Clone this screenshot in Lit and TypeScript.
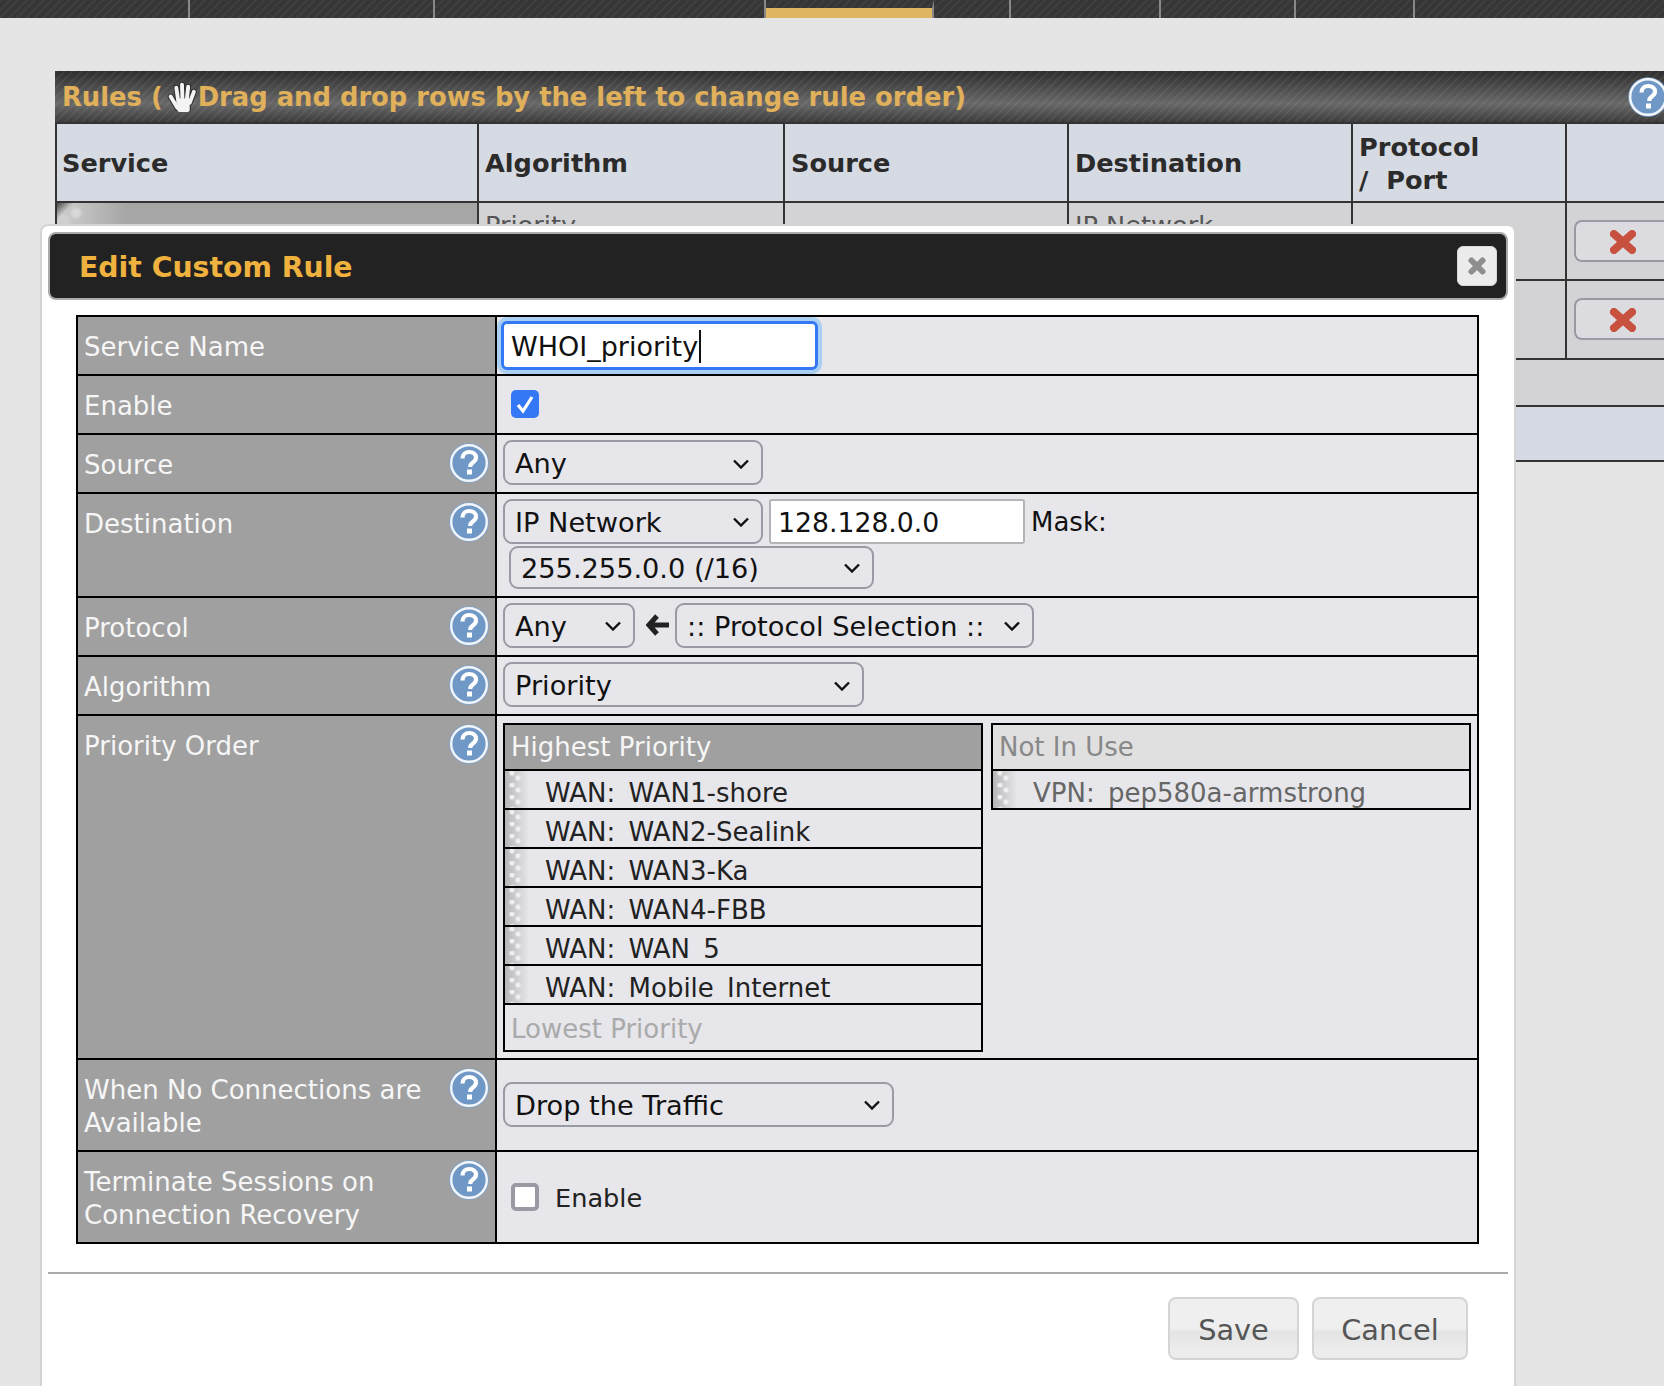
import { LitElement, html, css } from "lit";
import { customElement } from "lit/decorators.js";

const helpIcon = (cls = "help") => html`<svg class=${cls} viewBox="0 0 40 40">
  <circle cx="20" cy="20" r="19.8" fill="#7ba3d0"></circle>
  <circle cx="20" cy="20" r="17.8" fill="#6f98c6" stroke="#f2f5f9" stroke-width="2.4"></circle>
  <path d="M13.500 15.500c0-4 3-6.500 6.800-6.500 4 0 6.700 2.300 6.700 5.600 0 2.600-1.600 3.900-3.400 5.100-1.500 1-2.300 1.800-2.300 3.600v.7" fill="none" stroke="#fff" stroke-width="4.200"></path>
  <rect x="18" y="26.500" width="5" height="5" fill="#fff"></rect>
</svg>`;

const chevron = html`<svg class="chev" viewBox="0 0 16 10"><path d="M1 1.500l7 7 7-7" fill="none" stroke="#111" stroke-width="2.400"></path></svg>`;

const redX = html`<svg class="redx" viewBox="0 0 26 24"><path d="M4 4l18 16M22 4L4 20" stroke="#c8503f" stroke-width="8" stroke-linecap="round"></path></svg>`;

const handStrokes = "M10 26L3.500 15M11 20L9 6.500M15 20L14.500 3.500M19 20L20.500 5.500M22 21L26 10.500";

@customElement("app-root")
export class AppRoot extends LitElement {
  static styles = css`
    :host {
      display: block;
      position: relative;
      width: 1664px;
      height: 1386px;
      overflow: hidden;
      background: #e5e5e5;
      font-family: "DejaVu Sans", sans-serif;
      font-size: 26px;
      line-height: 33px;
      color: #111;
    }

    /* top nav */
    .nav {
      display: flex;
      height: 18px;
      background: repeating-linear-gradient(135deg, #3f3f3f 0 2px, #363636 2px 6px);
    }
    .nav__tab {
      box-sizing: border-box;
      border-right: 2px solid #888;
      flex: none;
    }
    .nav__tab--on {
      border-top: 8px solid transparent;
      background: #e0b562;
      background-clip: padding-box;
    }

    /* rules table behind the dialog */
    .rules {
      width: 1616px;
      margin: 53px 0 0 55px;
    }
    .rules__bar {
      display: flex;
      align-items: center;
      justify-content: space-between;
      height: 51px;
      padding: 0 0 0 7px;
      box-sizing: border-box;
      background:
        repeating-linear-gradient(135deg, rgba(255, 255, 255, 0.05) 0 2px, transparent 2px 6px),
        linear-gradient(#2e2e2e, #686868 64%, #3c3c3c);
      color: #e0b15a;
      font-size: 25.8px;
      font-weight: bold;
    }
    .rules__title {
      display: flex;
      align-items: center;
      padding-top: 2px;
    }
    .hand {
      width: 31px;
      height: 31px;
      margin: -2px 0 0 4px;
      flex: none;
    }
    .hand__edge {
      fill: none;
      stroke: #2a2a2a;
      stroke-width: 5.600;
      stroke-linecap: round;
    }
    .hand__fill {
      fill: none;
      stroke: #f4f4f4;
      stroke-width: 3.800;
      stroke-linecap: round;
    }
    .help--bar {
      width: 40px;
      height: 40px;
      flex: none;
      transform: translateX(-3px);
    }
    .rules__row {
      display: grid;
      grid-template-columns: 422px 306px 284px 284px 214px 1fr;
      border-left: 2px solid #333;
      border-top: 2px solid #333;
      font-size: 25.6px;
    }
    .rules__row > div {
      padding: 0 6px;
      border-right: 2px solid #333;
      background: #d3d3d5;
      color: #555;
      box-sizing: border-box;
    }
    .rules__row--head {
      height: 77px;
    }
    .rules__row--head > div {
      display: flex;
      align-items: center;
      padding-top: 2px;
      background: #d6dae2;
      color: #2b2b2b;
      font-weight: bold;
    }
    .rules__row--head > .rules__first {
      padding-left: 5px;
    }
    .rules__row--body {
      height: 76px;
    }
    .rules__row--body > .rules__service {
      background:
        radial-gradient(circle at 19px 10px, #d8d8d8 3px, transparent 7px),
        radial-gradient(circle at 8px 17px, #d0d0d0 3px, transparent 7px),
        linear-gradient(135deg, #444 0, transparent 12px),
        linear-gradient(90deg, #cfcfcf, #a6a6a6 70px);
    }
    .rules__row--body > div {
      padding-top: 6px;
    }
    .rules__row--body > .rules__del {
      display: flex;
      justify-content: center;
      padding: 17px 0 0 7px;
      border: 0;
    }
    .del {
      display: flex;
      align-items: center;
      justify-content: center;
      box-sizing: border-box;
      width: 100%;
      height: 42px;
      padding: 2px 2px 0 0;
      border: 2px solid #9a9aa5;
      border-right: 0;
      border-radius: 8px 0 0 8px;
      background: #dcdce0;
    }
    .redx {
      width: 26px;
      height: 24px;
    }
    .rules__band {
      height: 45px;
      border-top: 2px solid #333;
      background: #d3d3d5;
    }
    .rules__band--blue {
      height: 53px;
      background: #d6dae2;
      border-bottom: 2px solid #333;
    }

    /* dialog */
    .dialog {
      position: absolute;
      left: 40px;
      top: 224px;
      box-sizing: border-box;
      width: 1476px;
      height: 1170px;
      padding: 6px 6px 0 6px;
      background: #fff;
      border: 2px solid #d4d4d4;
      border-radius: 8px;
    }
    .dialog__head {
      display: flex;
      align-items: center;
      justify-content: space-between;
      box-sizing: border-box;
      height: 68px;
      padding: 0 9px 0 29px;
      background: #222;
      border: 2px solid #aaa;
      border-radius: 8px;
      color: #f0b23e;
      font-size: 28.300px;
      font-weight: bold;
    }
    .dialog__head span {
      padding-top: 2px;
    }
    .dialog__close {
      display: flex;
      align-items: center;
      justify-content: center;
      box-sizing: border-box;
      width: 40px;
      height: 40px;
      background: #ececec;
      border: 1px solid #d8d8d8;
      border-radius: 6px;
    }
    .dialog__close svg {
      width: 20px;
      height: 20px;
    }

    /* form */
    .form {
      box-sizing: border-box;
      margin: 15px 0 0 28px;
      width: 1403px;
      border: solid #000;
      border-width: 0 2px 2px;
    }
    .row {
      display: grid;
      grid-template-columns: 419px 1fr;
      box-sizing: border-box;
      border-top: 2px solid #000;
      background: #e6e6eb;
    }
    .label {
      display: flex;
      justify-content: space-between;
      box-sizing: border-box;
      padding: 8px 6px 0 6px;
      background: #a0a0a0;
      border-right: 2px solid #000;
      color: #f6f6f6;
    }
    .label span {
      margin-top: 6px;
    }
    .help {
      flex: none;
      width: 40px;
      height: 40px;
    }
    .cell {
      padding: 5px 6px 0;
    }
    .cell--mid {
      display: flex;
      align-items: center;
      padding-top: 0;
    }
    .cell--mid .select {
      margin-bottom: 2px;
    }
    .line {
      display: flex;
      align-items: center;
      height: 44px;
    }
    .line--second {
      margin: 2px 0 0 6px;
    }
    .select {
      display: flex;
      align-items: center;
      justify-content: space-between;
      box-sizing: border-box;
      height: 45px;
      padding: 2px 12px 0 10px;
      border: 2px solid #9a9aa5;
      border-radius: 9px;
      background: #e6e6eb;
      font-size: 27.200px;
      flex: none;
    }
    .select--short {
      height: 43px;
    }
    .chev {
      width: 16px;
      height: 10px;
    }
    .text {
      box-sizing: border-box;
      width: 256px;
      height: 45px;
      margin-left: 6px;
      padding: 2px 7px 0;
      border: 2px solid #b4b4b8;
      border-radius: 3px;
      background: #fff;
      font-size: 26.700px;
      line-height: 39px;
    }
    .mask {
      margin: 3px 0 0 6px;
    }
    .focus {
      box-sizing: border-box;
      display: flex;
      align-items: center;
      width: 317px;
      height: 49px;
      margin: -1px 0 0 -2px;
      padding: 1px 7px 0;
      border: 3px solid #3478f6;
      border-radius: 6px;
      background: #fff;
      box-shadow: 0 0 0 4px #a9d0f2;
      font-size: 27px;
    }
    .caret {
      width: 2px;
      height: 33px;
      margin-left: 1px;
      background: #111;
    }
    .check {
      display: flex;
      align-items: center;
      justify-content: center;
      box-sizing: border-box;
      width: 28px;
      height: 28px;
      margin-left: 8px;
      border-radius: 5px;
      flex: none;
    }
    .check--on {
      margin-bottom: 2px;
      background: #3478f6;
    }
    .check--off {
      background: #fff;
      border: 4px solid #9a9aa5;
    }
    .check svg {
      width: 24px;
      height: 24px;
    }
    .check__label {
      margin: 3px 0 0 16px;
      font-size: 25.600px;
      color: #222;
    }
    .arrow {
      width: 24px;
      height: 24px;
      margin: 0 5px 0 11px;
      flex: none;
    }

    /* priority lists */
    .lists {
      display: flex;
      align-items: flex-start;
      gap: 8px;
      margin-top: 2px;
    }
    .list {
      box-sizing: border-box;
      width: 480px;
      border: 2px solid #000;
    }
    .list__head {
      height: 44px;
      padding: 6px 6px 0;
      box-sizing: border-box;
      background: #a0a0a0;
      color: #f6f6f6;
    }
    .list--off .list__head {
      background: #e0e0e0;
      color: #888;
    }
    .list__row {
      box-sizing: border-box;
      height: 39px;
      padding: 6px 0 0 40px;
      border-top: 2px solid #000;
      background-color: #e6e6eb;
      background-image:
        radial-gradient(circle at 13px 7px, #f0f0f2 1.500px, transparent 3.500px),
        radial-gradient(circle at 7px 2px, #f0f0f2 1.500px, transparent 3.500px),
        linear-gradient(90deg, #b6b6b8, #cdcdcf 11px, #e6e6eb 24px);
      background-size: 24px 12px, 24px 12px, 100% 100%;
      background-repeat: repeat-y, repeat-y, no-repeat;
      word-spacing: 5px;
      color: #222;
    }
    .list--off .list__row {
      color: #666;
    }
    .list__foot {
      box-sizing: border-box;
      height: 47px;
      padding: 8px 6px 0;
      border-top: 2px solid #000;
      color: #aaa;
    }

    /* footer */
    .foot {
      display: flex;
      justify-content: flex-end;
      gap: 13px;
      margin-top: 28px;
      padding: 23px 40px 0 0;
      border-top: 2px solid #aaa;
    }
    .btn {
      box-sizing: border-box;
      height: 63px;
      border: 2px solid #d4d4d4;
      border-radius: 8px;
      background: linear-gradient(#efefef 50%, #e4e4e4 56%, #ececec 85%);
      color: #555;
      font-size: 28.800px;
      line-height: 62px;
      text-align: center;
    }
    .btn--save {
      width: 131px;
    }
    .btn--cancel {
      width: 156px;
    }
  `;

  private select(label: string, width: number, short = false) {
    return html`<div class="select ${short ? "select--short" : ""}" style="width:${width}px"><span>${label}</span>${chevron}</div>`;
  }

  private row(label: unknown, height: number, content: unknown, help = true, mid = false) {
    return html`<div class="row" style="height:${height}px">
      <div class="label"><span>${label}</span>${help ? helpIcon() : ""}</div>
      <div class="cell ${mid ? "cell--mid" : ""}">${content}</div>
    </div>`;
  }

  private listRow(text: string) {
    return html`<div class="list__row">${text}</div>`;
  }

  render() {
    const tabs = [190, 245, 331, 168, 77, 150, 135, 119];
    return html`
      <div class="nav">
        ${tabs.map(
          (w, i) => html`<div class="nav__tab ${i === 3 ? "nav__tab--on" : ""}" style="width:${w}px"></div>`
        )}
      </div>

      <div class="rules">
        <div class="rules__bar">
          <div class="rules__title">
            Rules (<svg class="hand" viewBox="0 0 30 30">
              <path class="hand__edge" d=${handStrokes}></path>
              <rect x="9" y="16" width="14" height="14" rx="3" fill="#2a2a2a"></rect>
              <path class="hand__fill" d=${handStrokes}></path>
              <rect x="10" y="17" width="12" height="13" rx="2" fill="#f4f4f4"></rect></svg
            >Drag and drop rows by the left to change rule order)
          </div>
          ${helpIcon("help--bar")}
        </div>
        <div class="rules__row rules__row--head">
          <div class="rules__first">Service</div>
          <div>Algorithm</div>
          <div>Source</div>
          <div>Destination</div>
          <div><span>Protocol<br />/&nbsp; Port</span></div>
          <div></div>
        </div>
        <div class="rules__row rules__row--body">
          <div class="rules__service"></div>
          <div>Priority</div>
          <div></div>
          <div>IP Network</div>
          <div></div>
          <div class="rules__del"><div class="del">${redX}</div></div>
        </div>
        <div class="rules__row rules__row--body" style="height:77px">
          <div class="rules__service"></div>
          <div></div>
          <div></div>
          <div></div>
          <div></div>
          <div class="rules__del"><div class="del">${redX}</div></div>
        </div>
        <div class="rules__band"></div>
        <div class="rules__band rules__band--blue"></div>
      </div>

      <div class="dialog">
        <div class="dialog__head">
          <span>Edit Custom Rule</span>
          <div class="dialog__close">
            <svg viewBox="0 0 20 20"><path d="M4.500 4.500l11 11M15.500 4.500l-11 11" stroke="#8e8e8e" stroke-width="6" stroke-linecap="round"></path></svg>
          </div>
        </div>

        <div class="form">
          ${this.row(
            "Service Name",
            59,
            html`<div class="focus">WHOI_priority<span class="caret"></span></div>`,
            false
          )}
          ${this.row(
            "Enable",
            59,
            html`<div class="check check--on">
              <svg viewBox="0 0 24 24"><path d="M5 13l5 6L19 5" fill="none" stroke="#fff" stroke-width="3.200"></path></svg>
            </div>`,
            false,
            true
          )}
          ${this.row("Source", 59, this.select("Any", 260))}
          ${this.row(
            "Destination",
            104,
            html`<div class="line">
                ${this.select("IP Network", 260)}
                <div class="text">128.128.0.0</div>
                <span class="mask">Mask:</span>
              </div>
              <div class="line line--second">${this.select("255.255.0.0 (/16)", 365, true)}</div>`
          )}
          ${this.row(
            "Protocol",
            59,
            html`<div class="line">
              ${this.select("Any", 132)}
              <svg class="arrow" viewBox="0 0 24 24"><path d="M11 3L3 12l8 9M4 12h19" fill="none" stroke="#222" stroke-width="5"></path></svg>
              ${this.select(":: Protocol Selection ::", 359)}
            </div>`
          )}
          ${this.row("Algorithm", 59, this.select("Priority", 361))}
          ${this.row(
            "Priority Order",
            344,
            html`<div class="lists">
              <div class="list">
                <div class="list__head">Highest Priority</div>
                ${this.listRow("WAN: WAN1-shore")}
                ${this.listRow("WAN: WAN2-Sealink")}
                ${this.listRow("WAN: WAN3-Ka")}
                ${this.listRow("WAN: WAN4-FBB")}
                ${this.listRow("WAN: WAN 5")}
                ${this.listRow("WAN: Mobile Internet")}
                <div class="list__foot">Lowest Priority</div>
              </div>
              <div class="list list--off">
                <div class="list__head">Not In Use</div>
                ${this.listRow("VPN: pep580a-armstrong")}
              </div>
            </div>`
          )}
          ${this.row(
            html`When No Connections are<br />Available`,
            92,
            this.select("Drop the Traffic", 391),
            true,
            true
          )}
          ${this.row(
            html`Terminate Sessions on<br />Connection Recovery`,
            92,
            html`<div class="check check--off"></div>
              <span class="check__label">Enable</span>`,
            true,
            true
          )}
        </div>

        <div class="foot">
          <div class="btn btn--save">Save</div>
          <div class="btn btn--cancel">Cancel</div>
        </div>
      </div>
    `;
  }
}
